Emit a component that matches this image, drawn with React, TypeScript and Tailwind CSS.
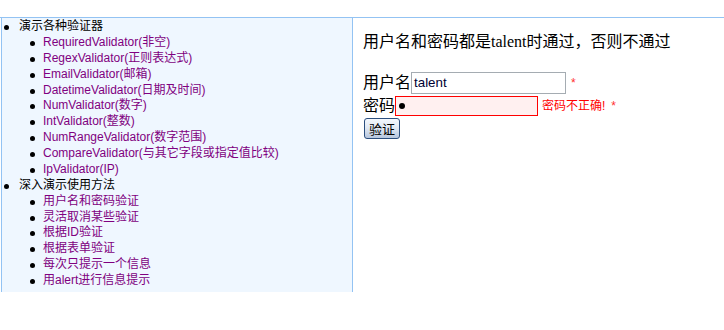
import React from "react";

const group1 = [
  "RequiredValidator(非空)",
  "RegexValidator(正则表达式)",
  "EmailValidator(邮箱)",
  "DatetimeValidator(日期及时间)",
  "NumValidator(数字)",
  "IntValidator(整数)",
  "NumRangeValidator(数字范围)",
  "CompareValidator(与其它字段或指定值比较)",
  "IpValidator(IP)",
];
const group2 = [
  "用户名和密码验证",
  "灵活取消某些验证",
  "根据ID验证",
  "根据表单验证",
  "每次只提示一个信息",
  "用alert进行信息提示",
];

const listFont = {
  fontFamily: '"Liberation Sans", "Noto Sans CJK SC", sans-serif',
};

function Bullet({ inner }: { inner?: boolean }) {
  return (
    <span
      className={
        "absolute top-[6px] w-[5px] h-[5px] rounded-full bg-black " +
        (inner ? "left-[-13px]" : "left-[-15px]")
      }
    />
  );
}

export default function App() {
  return (
    <div className="w-[724px] h-[330px] bg-white overflow-hidden pt-[17px]">
      <div className="flex border-t border-[#93c3f3]">
        <div
          className="ml-px w-[352px] h-[274px] pt-[1px] border-l border-r border-[#93c3f3] bg-[#eff7ff] text-[12px] leading-[15.875px] text-black"
          style={listFont}
        >
          <ul className="pl-[17px]">
            <li className="relative">
              <Bullet />
              演示各种验证器
              <ul className="pl-[24px]">
                {group1.map((t) => (
                  <li key={t} className="relative text-[#800080]">
                    <Bullet inner />
                    {t}
                  </li>
                ))}
              </ul>
            </li>
            <li className="relative">
              <Bullet />
              深入演示使用方法
              <ul className="pl-[24px]">
                {group2.map((t) => (
                  <li key={t} className="relative text-[#800080]">
                    <Bullet inner />
                    {t}
                  </li>
                ))}
              </ul>
            </li>
          </ul>
        </div>
        <div
          className="pl-[10px] text-[16px] text-black"
          style={{ fontFamily: '"Liberation Serif", "Noto Sans CJK SC", serif' }}
        >
          <div className="mt-[15px] leading-[18px] h-[18px]">
            用户名和密码都是talent时通过，否则不通过
          </div>
          <div className="mt-[21px] flex items-center h-[22px]">
            <span className="leading-[18px]">用户名</span>
            <div
              className="w-[155px] h-[22px] border border-[#a5acb2] bg-white flex items-center pl-[2px] text-[13.33px] text-[#000033]"
              style={{ fontFamily: '"Liberation Sans", sans-serif' }}
            >
              talent
            </div>
            <span
              className="ml-[5px] text-[12px] text-[#ff3030]"
              style={{ fontFamily: '"Liberation Sans", sans-serif' }}
            >
              *
            </span>
          </div>
          <div className="mt-[2px] flex items-center h-[20px]">
            <span className="leading-[18px]">密码</span>
            <div className="w-[143px] h-[20px] border border-[#ff0000] bg-[#fff0f0] flex items-center pl-[3px]">
              <span className="w-[6px] h-[6px] rounded-full bg-black" />
            </div>
            <span
              className="ml-[4px] text-[12px] text-[#ff0000]"
              style={{ fontFamily: '"Liberation Sans", "Noto Sans CJK SC", sans-serif' }}
            >
              密码不正确!
            </span>
            <span
              className="ml-[6px] text-[12px] text-[#ff3030]"
              style={{ fontFamily: '"Liberation Sans", sans-serif' }}
            >
              *
            </span>
          </div>
          <div className="mt-[2px] ml-px">
            <button
              className="w-[36px] h-[21px] rounded-[3px] border border-[#2c4f7f] bg-gradient-to-b from-[#f4f8fd] via-[#dfe7f2] to-[#b6c6dd] text-[13px] leading-[18px] text-black flex items-center justify-center"
              style={{ fontFamily: '"Noto Sans CJK SC", sans-serif' }}
            >
              验证
            </button>
          </div>
        </div>
      </div>
    </div>
  );
}
